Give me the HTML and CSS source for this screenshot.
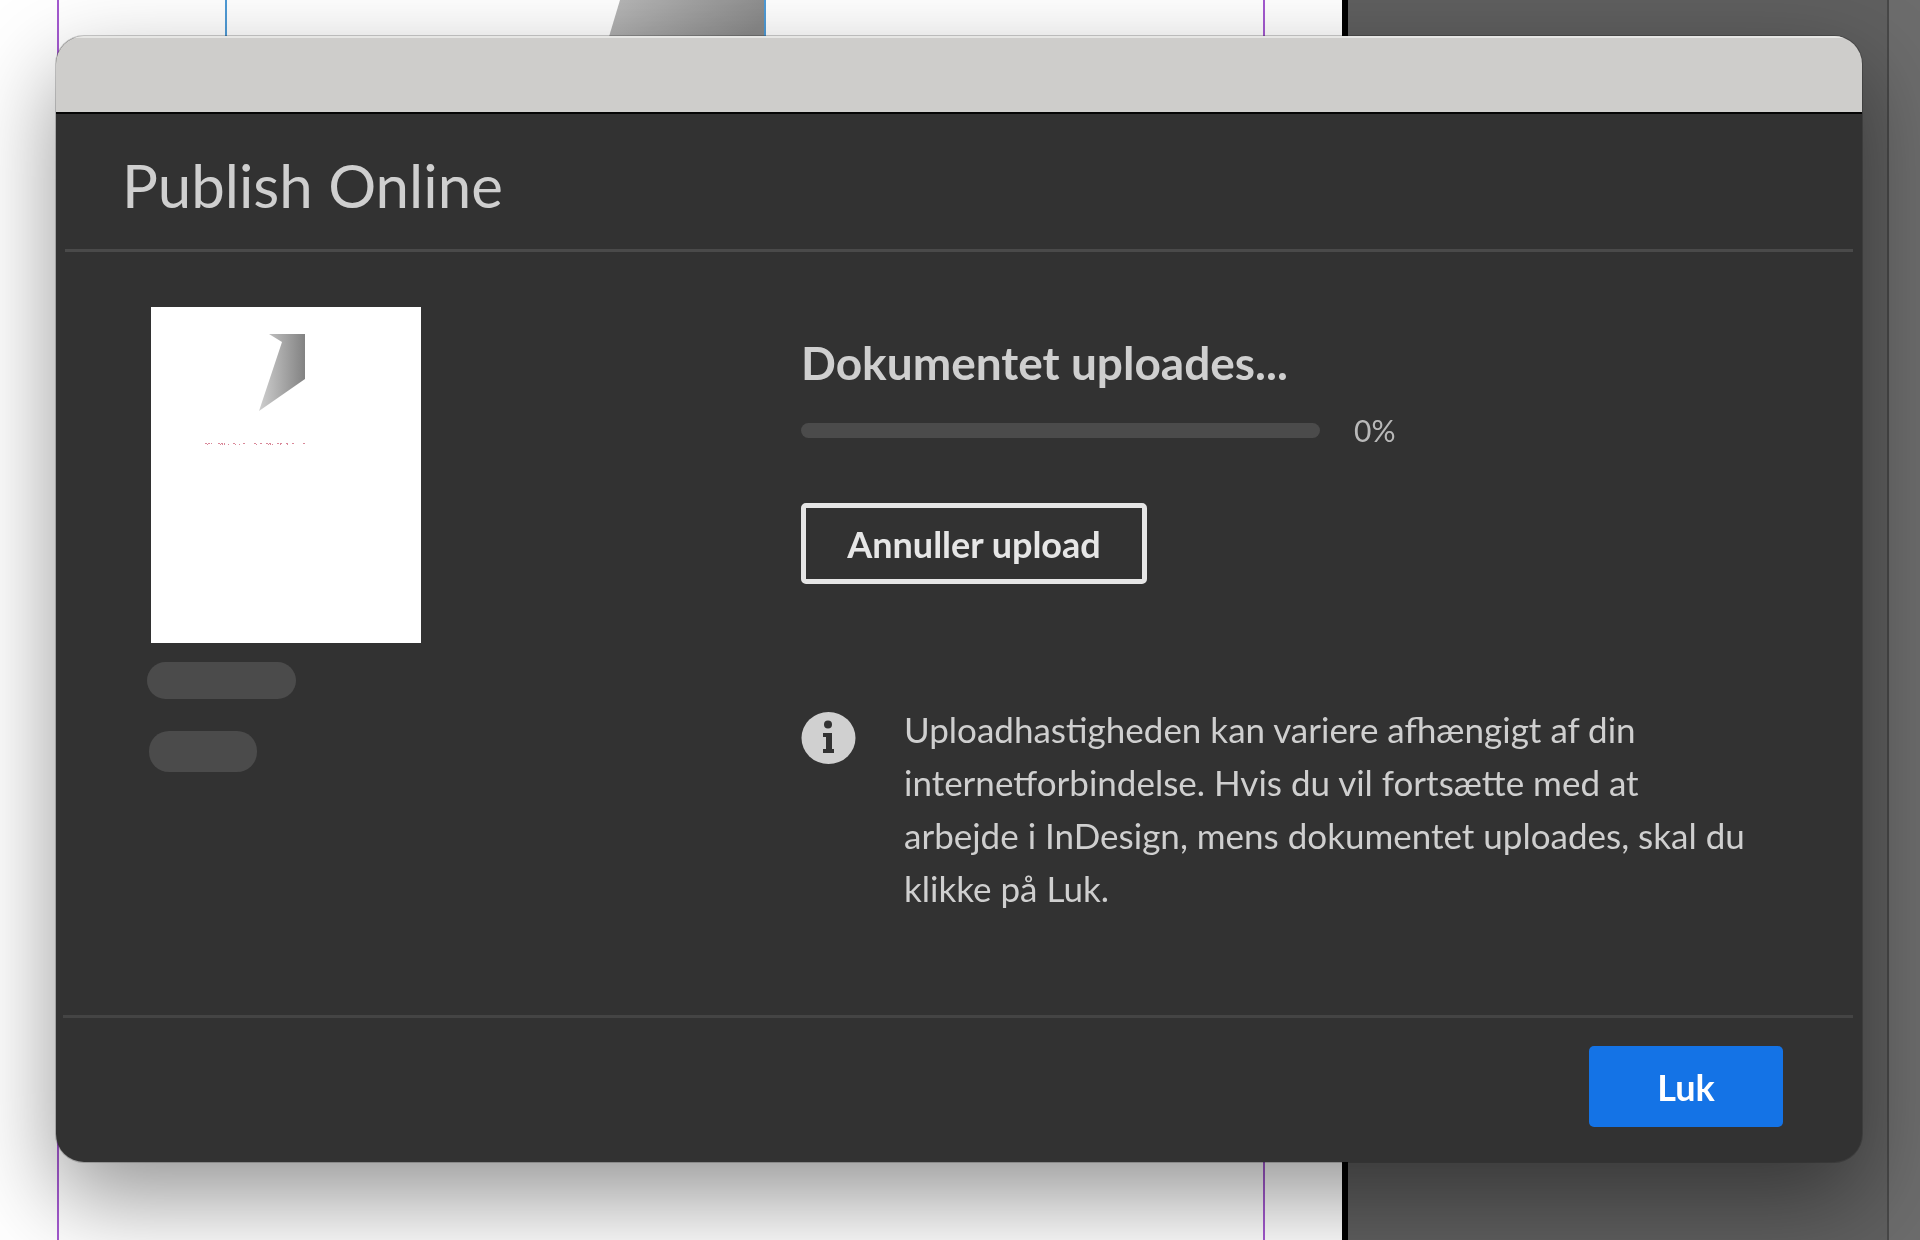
FILE: index.html
```html
<!DOCTYPE html>
<html lang="da">
<head>
    <meta charset="UTF-8">
    <meta name="viewport" content="width=device-width, initial-scale=1.0">
    <title>Publish Online</title>
    <link rel="stylesheet" href="styles.css">
</head>
<body>
    <!-- Document window behind the dialog -->
    <div class="workspace" aria-hidden="true">
        <div class="page">
            <div class="guide margin-left"></div>
            <div class="guide frame-left"></div>
            <svg class="artwork" width="156" height="60" viewBox="0 0 156 60">
                <defs>
                    <linearGradient id="artwork-fill" x1="0" y1="0" x2="1" y2="0.3">
                        <stop offset="0" stop-color="#bababa"/>
                        <stop offset="1" stop-color="#8b8b8b"/>
                    </linearGradient>
                </defs>
                <path d="M12 0H156V60H-6Z" fill="url(#artwork-fill)"/>
            </svg>
            <div class="guide frame-right"></div>
            <div class="guide margin-right"></div>
        </div>
        <div class="pasteboard"></div>
        <div class="scrollbar"></div>
    </div>

    <main class="dialog" role="dialog" aria-labelledby="dialog-title">
        <div class="titlebar"></div>
        <header class="dialog-header">
            <h1 id="dialog-title">Publish Online</h1>
        </header>

        <div class="dialog-body">
            <div class="preview">
                <svg class="thumbnail" width="270" height="336" viewBox="0 0 270 336" role="img" aria-label="Side 1">
                    <defs>
                        <linearGradient id="logo-fill" x1="0" y1="0" x2="1" y2="0">
                            <stop offset="0" stop-color="#cfcfcf"/>
                            <stop offset="1" stop-color="#828282"/>
                        </linearGradient>
                    </defs>
                    <rect width="270" height="336" fill="#fff"/>
                    <path d="M118 27H154V72L108 104L131 35Z" fill="url(#logo-fill)"/>
                    <g stroke="#c9566e" fill="none" opacity="0.7">
                        <path d="M54 136.500H61M67 136.500H74M82 136.500H85M92 136.500H95M103 136.500H105M109 136.500H111M115 136.500H120M126 136.500H132M135 136.500H138M141 136.500H143M152 136.500H154" stroke-dasharray="2 1"/>
                        <path d="M56 137.500H58M69 137.500H75M77 137.500H79M84 137.500H86M88 137.500H90M105 137.500H107M117 137.500H122M129 137.500H131M136 137.500H138" stroke-dasharray="1 1"/>
                    </g>
                </svg>
                <div class="placeholder placeholder-title"></div>
                <div class="placeholder placeholder-pages"></div>
            </div>

            <div class="upload">
                <h2><label for="upload-progress">Dokumentet uploades...</label></h2>
                <div class="progress-row">
                    <progress id="upload-progress" value="0" max="100"></progress>
                    <span class="percent">0%</span>
                </div>
                <button type="button" class="btn btn-outline">Annuller upload</button>
                <div class="info">
                    <svg class="info-icon" width="55" height="52" viewBox="0 0 55 52" aria-hidden="true">
                        <ellipse cx="27.500" cy="26" rx="27" ry="26" fill="#d0d0d0"/>
                        <ellipse cx="27" cy="12.500" rx="4" ry="4" fill="#323232"/>
                        <path d="M22 21H31V37H33V41H22V37H25V25H22Z" fill="#323232"/>
                    </svg>
                    <p>Uploadhastigheden kan variere afhængigt af din<br>
                    internetforbindelse. Hvis du vil fortsætte med at<br>
                    arbejde i InDesign, mens dokumentet uploades, skal du<br>
                    klikke på Luk.</p>
                </div>
            </div>
        </div>

        <footer class="dialog-footer">
            <button type="button" class="btn btn-primary">Luk</button>
        </footer>
    </main>
</body>
</html>
```

FILE: styles.css
```css
* {
    box-sizing: border-box;
}
body {
    margin: 0;
    min-height: 100vh;
    padding: 36px 58px 78px 56px;
    display: flex;
    overflow: hidden;
    font-family: Lato, "Open Sans", sans-serif;
    color: #cfcfcf;
}
h1, h2, p {
    margin: 0;
}

/* Document window */
.workspace {
    position: fixed;
    inset: 0;
    z-index: -1;
    display: flex;
}
.page {
    position: relative;
    flex: 0 0 69.9%;
    background-color: #fff;
}
.pasteboard {
    flex: 1;
    border-left: 6px solid #000;
    background-color: #5f5f5f;
}
.scrollbar {
    flex: 0 0 33px;
    border-left: 2px solid #484848;
    background-color: #6c6c6c;
}
.guide {
    position: absolute;
    top: 0;
    bottom: 0;
    width: 2px;
}
.margin-left {
    left: 57px;
    background-color: #a45ad0;
}
.margin-right {
    left: 1263px;
    background-color: #a45ad0;
}
.frame-left,
.frame-right {
    bottom: auto;
    height: 60px;
    background-color: #4f9bd6;
}
.frame-left {
    left: 225px;
}
.frame-right {
    left: 764px;
}
.artwork {
    position: absolute;
    top: 0;
    left: 608px;
}

/* Dialog */
.dialog {
    flex: 1;
    display: flex;
    flex-direction: column;
    border-radius: 28px;
    overflow: hidden;
    background-color: #323232;
    box-shadow: 0 0 0 1px rgba(0, 0, 0, 0.2), 0 36px 90px rgba(0, 0, 0, 0.42);
}
.titlebar {
    height: 78px;
    border-top: 2px solid #e6e6e4;
    border-bottom: 2px solid #050505;
    background-color: #cecdcb;
}
.dialog-header {
    margin: 0 9px;
    padding: 35px 57px 28px;
    border-bottom: 3px solid #4a4a4a;
}
h1 {
    font-size: 60px;
    line-height: 72px;
    font-weight: 400;
}
.dialog-body {
    flex: 1;
    display: flex;
    padding: 55px 60px 0 91px;
}
.preview {
    flex: 0 0 654px;
    display: flex;
    flex-direction: column;
    align-items: flex-start;
}
.thumbnail {
    margin-left: 4px;
}
.placeholder {
    border-radius: 20px;
    background-color: #4b4b4b;
}
.placeholder-title {
    width: 149px;
    height: 37px;
    margin-top: 19px;
}
.placeholder-pages {
    width: 108px;
    height: 41px;
    margin: 32px 2px 0;
}
.upload {
    flex: 1;
    padding-top: 28px;
}
h2 {
    font-size: 46px;
    line-height: 56px;
    font-weight: 700;
}
.progress-row {
    display: flex;
    align-items: center;
    gap: 34px;
    margin-top: 22px;
}
progress {
    appearance: none;
    width: 519px;
    height: 15px;
    border: none;
    border-radius: 8px;
    overflow: hidden;
    background-color: #4b4b4b;
}
progress::-webkit-progress-bar {
    background-color: #4b4b4b;
}
progress::-webkit-progress-value {
    background-color: #1473e6;
}
.percent {
    font-size: 30px;
    line-height: 34px;
    color: #b9b9b9;
}
.btn {
    height: 81px;
    border-radius: 5px;
    font-family: inherit;
    font-size: 36px;
    font-weight: 700;
    cursor: pointer;
}
.btn-outline {
    width: 346px;
    margin-top: 56px;
    border: 5px solid #e6e6e6;
    background-color: transparent;
    color: #e6e6e6;
}
.info {
    display: flex;
    align-items: flex-start;
    gap: 48px;
    margin-top: 119px;
}
.info-icon {
    flex: none;
    margin-top: 9px;
}
.info p {
    font-size: 35px;
    line-height: 53px;
    white-space: nowrap;
}
.dialog-footer {
    display: flex;
    justify-content: flex-end;
    margin: 0 9px 0 7px;
    padding: 28px 70px 35px;
    border-top: 3px solid #444;
}
.btn-primary {
    width: 194px;
    border: none;
    background-color: #1473e6;
    color: #fff;
}
```
